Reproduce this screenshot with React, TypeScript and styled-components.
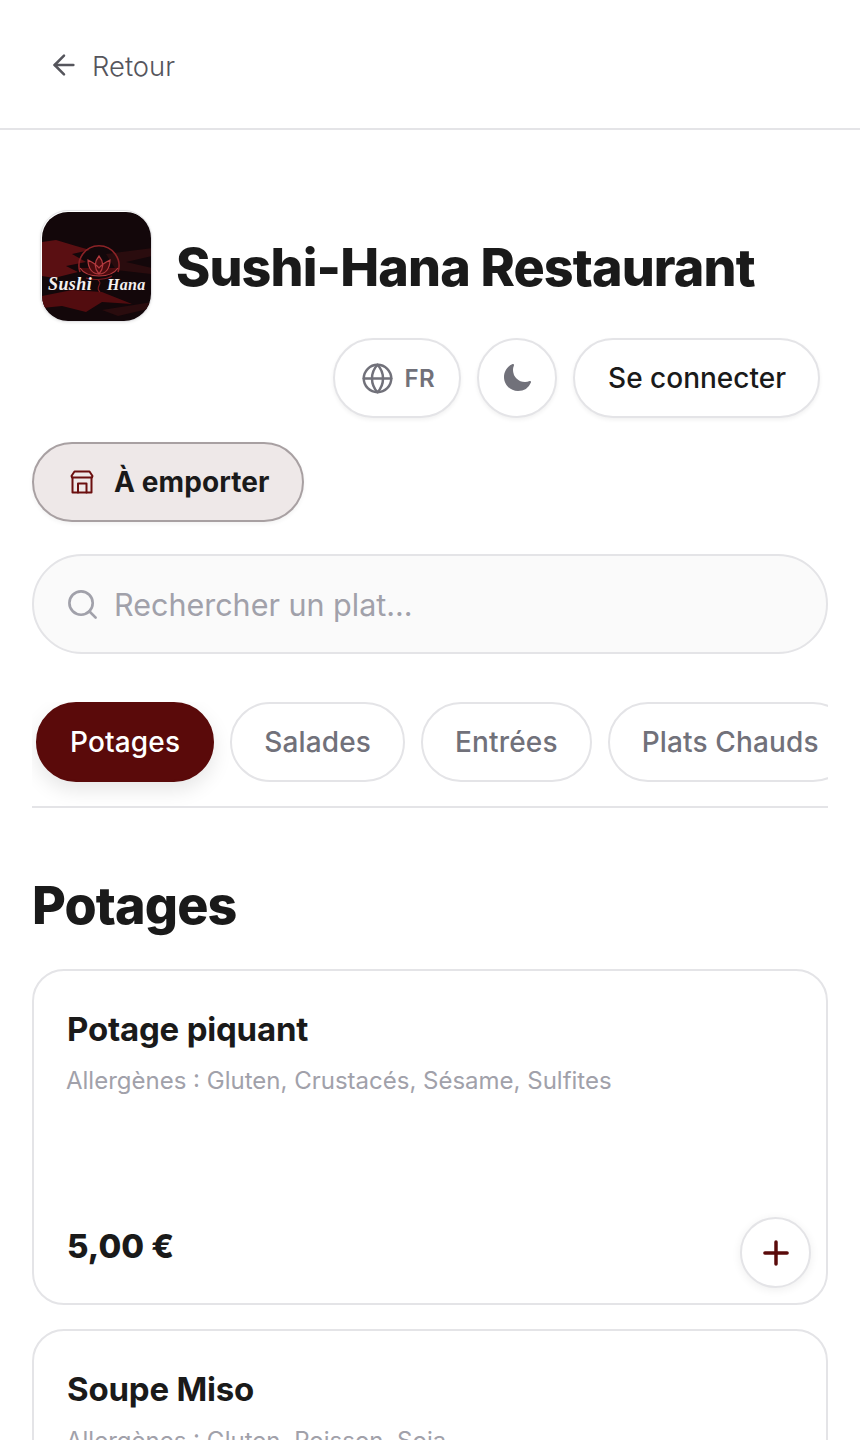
import React from 'react';
import styled, { createGlobalStyle } from 'styled-components';
import { ArrowLeft, Globe, Search, Plus } from 'lucide-react';
import { HiMoon } from 'react-icons/hi2';

const GlobalStyle = createGlobalStyle`
    html, body { margin: 0; padding: 0; background: #fff; }
    body {
        font-family: Inter, "Liberation Sans", sans-serif;
        color: #1a1a1a;
        overflow: hidden;
        height: 1440px;
    }
    * { box-sizing: border-box; }
`;

const categories = ['Potages', 'Salades', 'Entrées', 'Plats Chauds'];

const dishes = [
    { name: 'Potage piquant', allergens: 'Allergènes : Gluten, Crustacés, Sésame, Sulfites', price: '5,00 €' },
    { name: 'Soupe Miso', allergens: 'Allergènes : Gluten, Poisson, Soja', price: '4,00 €' },
];

const Logo = () => (
    <svg width="110" height="110" viewBox="0 0 110 110">
        <rect width="110" height="110" fill="#13070a" />
        <path d="M0 30 L14 28 L34 34 L48 38 L30 42 L44 50 L24 54 L36 60 L12 66 L0 64 Z" fill="#5a0f12" />
        <path d="M64 42 L110 36 L110 44 L84 50 L110 56 L110 62 L74 58 Z" fill="#2a0c0e" />
        <path d="M0 84 L30 78 L60 80 L90 92 L60 90 L44 100 L20 94 L0 96 Z" fill="#520c0f" />
        <path d="M60 98 L110 90 L110 96 L76 104 Z" fill="#2a0c0e" />
        <path d="M38 60 A20 20 0 1 1 76 60" fill="none" stroke="#8a2226" strokeWidth="1.6" />
        <path d="M57 44 C52 50 52 56 57 62 C62 56 62 50 57 44 Z M46 48 C46 56 50 62 57 62 C64 62 68 56 68 48 C64 50 60 52 57 56 C54 52 50 50 46 48 Z M38 56 C42 62 50 64 57 64 C64 64 72 62 76 56" fill="#4a0b0e" stroke="#b23a3e" strokeWidth="1.2" />
        <path d="M44 66 C52 69 66 67 70 64 M56 68 C62 72 52 75 58 80" fill="none" stroke="#7a1a1e" strokeWidth="1.2" />
        <text x="6" y="78" fontFamily="'Liberation Serif', serif" fontStyle="italic" fontWeight="700" fontSize="18" letterSpacing="0.4" fill="#f4f0f0">Sushi</text>
        <text x="65" y="78" fontFamily="'Liberation Serif', serif" fontStyle="italic" fontWeight="700" fontSize="16" letterSpacing="0.3" fill="#f4f0f0">Hana</text>
    </svg>
);

const StoreIcon = () => (
    <svg width="24" height="24" viewBox="0 0 24 24" fill="none" stroke="#6b0f0f" strokeWidth="2" strokeLinejoin="round" strokeLinecap="round">
        <path d="M4.5 1.5 L19.5 1.5 L22.5 6 L22 7.5 L2 7.5 L1.5 6 Z" />
        <path d="M2.5 7.5 L2.5 22.5 L21.5 22.5 L21.5 7.5" />
        <path d="M8 22.5 L8 13.5 L16.5 13.5 L16.5 22.5" />
    </svg>
);

const App = () => {
    return (
        <Page>
            <GlobalStyle />
            <TopBar>
                <BackLink>
                    <ArrowLeft size={32} strokeWidth={1.9} color="#55555c" />
                    <BackLabel>Retour</BackLabel>
                </BackLink>
            </TopBar>
            <Content>
                <Brand>
                    <LogoFrame><Logo /></LogoFrame>
                    <Title>Sushi-Hana Restaurant</Title>
                </Brand>
                <Actions>
                    <PillButton>
                        <Globe size={33} strokeWidth={1.8} color="#71717a" />
                        <LangLabel>FR</LangLabel>
                    </PillButton>
                    <RoundButton>
                        <HiMoon size={32} color="#71717a" />
                    </RoundButton>
                    <LoginButton>Se connecter</LoginButton>
                </Actions>
                <ModeButton>
                    <StoreIcon />
                    <span>À emporter</span>
                </ModeButton>
                <SearchBox>
                    <Search size={35} strokeWidth={1.8} color="#a1a1aa" />
                    <SearchInput placeholder="Rechercher un plat..." readOnly />
                </SearchBox>
                <Tabs>
                    {categories.map((category, index) => (
                        <Tab key={category} $active={index === 0}>{category}</Tab>
                    ))}
                </Tabs>
                <SectionTitle>Potages</SectionTitle>
                <DishList>
                    {dishes.map((dish) => (
                        <DishCard key={dish.name}>
                            <DishName>{dish.name}</DishName>
                            <Allergens>{dish.allergens}</Allergens>
                            <DishFooter>
                                <Price>{dish.price}</Price>
                                <AddButton>
                                    <Plus size={38} strokeWidth={2.2} color="#5a0a0a" />
                                </AddButton>
                            </DishFooter>
                        </DishCard>
                    ))}
                </DishList>
            </Content>
        </Page>
    );
};

const Page = styled.div`
    width: 860px;
    height: 1440px;
    overflow: hidden;
`;

const TopBar = styled.header`
    height: 130px;
    padding: 0 40px;
    display: flex;
    align-items: center;
    border-bottom: 2px solid #e4e4e7;
`;

const BackLink = styled.div`
    display: flex;
    align-items: center;
    gap: 12px;
    margin-top: 2px;
    padding-left: 8px;
    font-size: 27.4px;
    font-weight: 300;
    color: #55555c;
`;

const BackLabel = styled.span`
    margin-top: 2px;
`;

const Content = styled.main`
    padding: 80px 32px 0;
`;

const Brand = styled.div`
    display: flex;
    align-items: center;
    gap: 24px;
    padding-left: 8px;
`;

const LogoFrame = styled.div`
    width: 112px;
    height: 112px;
    padding: 1px;
    background: #fff;
    border: 1px solid #e4e4e7;
    border-radius: 28px;
    overflow: hidden;
    flex-shrink: 0;
    box-shadow: 0 1px 3px rgba(0, 0, 0, 0.08);

    svg {
        display: block;
        border-radius: 26px;
    }
`;

const Title = styled.h1`
    margin: 2px 0 0;
    font-size: 52px;
    font-weight: 800;
    letter-spacing: -0.87px;
    white-space: nowrap;
`;

const Actions = styled.div`
    display: flex;
    justify-content: flex-end;
    gap: 16px;
    margin-top: 16px;
    padding-right: 8px;
`;

const PillButton = styled.div`
    height: 80px;
    padding: 0 24px 0 26px;
    display: flex;
    align-items: center;
    gap: 11px;
    background: #fff;
    border: 2px solid #e4e4e7;
    border-radius: 40px;
    box-shadow: 0 2px 4px rgba(0, 0, 0, 0.06);
`;

const LangLabel = styled.span`
    font-size: 24px;
    font-weight: 600;
    letter-spacing: 0.4px;
    color: #71717a;
`;

const RoundButton = styled(PillButton)`
    width: 80px;
    padding: 0;
    justify-content: center;
`;

const LoginButton = styled(PillButton)`
    padding: 0 32px 0 33px;
    font-size: 28px;
    font-weight: 500;
    color: #1a1a1a;
`;

const ModeButton = styled.div`
    width: 272px;
    height: 80px;
    margin-top: 24px;
    padding-left: 36px;
    display: flex;
    align-items: center;
    gap: 20px;
    background: #eee8e8;
    border: 2px solid #a8a0a2;
    border-radius: 40px;
    font-size: 28px;
    font-weight: 700;
    letter-spacing: 0.1px;
    box-shadow: 0 2px 4px rgba(0, 0, 0, 0.05);
`;

const SearchBox = styled.div`
    height: 100px;
    margin-top: 32px;
    padding: 0 31px;
    display: flex;
    align-items: center;
    gap: 14px;
    background: #fafafa;
    border: 2px solid #e4e4e7;
    border-radius: 50px;
`;

const SearchInput = styled.input`
    flex: 1;
    min-width: 0;
    border: none;
    outline: none;
    padding: 0;
    background: transparent;
    font-family: inherit;
    font-size: 30.5px;
    font-weight: 400;

    &::placeholder {
        color: #a1a1aa;
    }
`;

const Tabs = styled.nav`
    display: flex;
    gap: 16px;
    margin-top: 48px;
    padding: 0 0 24px 4px;
    border-bottom: 2px solid #e4e4e7;
    overflow: hidden;
`;

const Tab = styled.div<{ $active: boolean }>`
    height: 80px;
    padding: 0 32px;
    display: flex;
    align-items: center;
    flex-shrink: 0;
    border-radius: 40px;
    font-size: 28px;
    font-weight: 500;
    letter-spacing: 0.15px;
    white-space: nowrap;
    background: ${(p) => (p.$active ? '#5a0a0a' : '#fff')};
    color: ${(p) => (p.$active ? '#fff' : '#71717a')};
    border: 2px solid ${(p) => (p.$active ? '#5a0a0a' : '#e4e4e7')};
    box-shadow: ${(p) => (p.$active ? '0 8px 20px rgba(0, 0, 0, 0.1)' : 'none')};
`;

const SectionTitle = styled.h2`
    margin: 66px 0 0;
    font-size: 52px;
    line-height: 64px;
    font-weight: 800;
    letter-spacing: -0.87px;
`;

const DishList = styled.div`
    display: flex;
    flex-direction: column;
    gap: 24px;
    margin-top: 31px;
`;

const DishCard = styled.article`
    height: 336px;
    padding: 39px 15px 15px 33px;
    display: flex;
    flex-direction: column;
    background: #fff;
    border: 2px solid #e4e4e7;
    border-radius: 32px;
`;

const DishName = styled.h3`
    margin: 0;
    font-size: 33px;
    line-height: 38px;
    font-weight: 700;
    letter-spacing: -0.2px;
`;

const Allergens = styled.p`
    margin: 17px 0 0 -1px;
    font-size: 24px;
    line-height: 32px;
    color: #a1a1aa;
`;

const DishFooter = styled.div`
    margin-top: auto;
    display: flex;
    justify-content: space-between;
    align-items: center;
`;

const Price = styled.span`
    font-size: 33px;
    font-weight: 800;
    margin-top: -14px;
`;

const AddButton = styled.div`
    width: 71px;
    height: 71px;
    display: flex;
    align-items: center;
    justify-content: center;
    border: 2px solid #e4e4e7;
    border-radius: 50%;
    background: #fff;
    box-shadow: 0 2px 10px rgba(0, 0, 0, 0.07);
`;

export default App;
